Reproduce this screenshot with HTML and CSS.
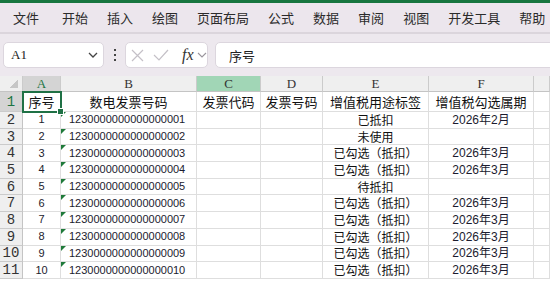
FILE: index.html
```html
<!DOCTYPE html>
<html lang="zh-CN">
<head>
    <meta charset="UTF-8">
    <title>发票清单</title>
    <link rel="stylesheet" href="styles.css">
</head>
<body>

<div class="topbar"></div>

<nav class="menu">
    <span>文件</span>
    <span>开始</span>
    <span>插入</span>
    <span>绘图</span>
    <span>页面布局</span>
    <span>公式</span>
    <span>数据</span>
    <span>审阅</span>
    <span>视图</span>
    <span>开发工具</span>
    <span>帮助</span>
</nav>

<div class="formula-bar">
    <div class="name-box">
        <span class="name-text">A1</span>
        <svg class="chev" width="10" height="6" viewBox="0 0 10 6"><path d="M1 1l4 4 4-4" fill="none" stroke="#444" stroke-width="1.3"/></svg>
    </div>
    <div class="dots"><i></i><i></i><i></i></div>
    <div class="fn-box">
        <svg width="13" height="13" viewBox="0 0 13 13"><path d="M1 1l11 11M12 1L1 12" stroke="#c4c0c7" stroke-width="1.2"/></svg>
        <svg width="16" height="12" viewBox="0 0 16 12"><path d="M1 6l5 5L15 1" fill="none" stroke="#c4c0c7" stroke-width="1.2"/></svg>
        <span class="fx">fx</span>
        <svg width="10" height="6" viewBox="0 0 10 6"><path d="M1 1l4 4 4-4" fill="none" stroke="#9a959d" stroke-width="1.1"/></svg>
    </div>
    <div class="formula-input">序号</div>
</div>

<div class="sheet">
    <div class="corner"></div>
    <div class="col-head sel">A</div>
    <div class="col-head">B</div>
    <div class="col-head hover">C</div>
    <div class="col-head">D</div>
    <div class="col-head">E</div>
    <div class="col-head">F</div>
    <div class="col-head"></div>

    <div class="row-head sel">1</div>
    <div class="cell title active">序号<span class="handle"></span></div>
    <div class="cell title">数电发票号码</div>
    <div class="cell title">发票代码</div>
    <div class="cell title">发票号码</div>
    <div class="cell title">增值税用途标签</div>
    <div class="cell title">增值税勾选属期</div>
    <div class="cell"></div>

    <div class="row-head">2</div>
    <div class="cell num">1</div>
    <div class="cell code">1230000000000000001</div>
    <div class="cell"></div>
    <div class="cell"></div>
    <div class="cell ctr">已抵扣</div>
    <div class="cell date">2026年2月</div>
    <div class="cell"></div>

    <div class="row-head">3</div>
    <div class="cell num">2</div>
    <div class="cell code">1230000000000000002</div>
    <div class="cell"></div>
    <div class="cell"></div>
    <div class="cell ctr">未使用</div>
    <div class="cell date"></div>
    <div class="cell"></div>

    <div class="row-head">4</div>
    <div class="cell num">3</div>
    <div class="cell code">1230000000000000003</div>
    <div class="cell"></div>
    <div class="cell"></div>
    <div class="cell ctr">已勾选（抵扣）</div>
    <div class="cell date">2026年3月</div>
    <div class="cell"></div>

    <div class="row-head">5</div>
    <div class="cell num">4</div>
    <div class="cell code">1230000000000000004</div>
    <div class="cell"></div>
    <div class="cell"></div>
    <div class="cell ctr">已勾选（抵扣）</div>
    <div class="cell date">2026年3月</div>
    <div class="cell"></div>

    <div class="row-head">6</div>
    <div class="cell num">5</div>
    <div class="cell code">1230000000000000005</div>
    <div class="cell"></div>
    <div class="cell"></div>
    <div class="cell ctr">待抵扣</div>
    <div class="cell date"></div>
    <div class="cell"></div>

    <div class="row-head">7</div>
    <div class="cell num">6</div>
    <div class="cell code">1230000000000000006</div>
    <div class="cell"></div>
    <div class="cell"></div>
    <div class="cell ctr">已勾选（抵扣）</div>
    <div class="cell date">2026年3月</div>
    <div class="cell"></div>

    <div class="row-head">8</div>
    <div class="cell num">7</div>
    <div class="cell code">1230000000000000007</div>
    <div class="cell"></div>
    <div class="cell"></div>
    <div class="cell ctr">已勾选（抵扣）</div>
    <div class="cell date">2026年3月</div>
    <div class="cell"></div>

    <div class="row-head">9</div>
    <div class="cell num">8</div>
    <div class="cell code">1230000000000000008</div>
    <div class="cell"></div>
    <div class="cell"></div>
    <div class="cell ctr">已勾选（抵扣）</div>
    <div class="cell date">2026年3月</div>
    <div class="cell"></div>

    <div class="row-head">10</div>
    <div class="cell num">9</div>
    <div class="cell code">1230000000000000009</div>
    <div class="cell"></div>
    <div class="cell"></div>
    <div class="cell ctr">已勾选（抵扣）</div>
    <div class="cell date">2026年3月</div>
    <div class="cell"></div>

    <div class="row-head">11</div>
    <div class="cell num">10</div>
    <div class="cell code">1230000000000000010</div>
    <div class="cell"></div>
    <div class="cell"></div>
    <div class="cell ctr">已勾选（抵扣）</div>
    <div class="cell date">2026年3月</div>
    <div class="cell"></div>
</div>

</body>
</html>
```

FILE: styles.css
```css
body {
    margin: 0;
    width: 550px;
    height: 281px;
    overflow: hidden;
    background: #fff;
    font-family: "Noto Sans CJK SC", sans-serif;
}

.topbar {
    height: 3px;
    background: #17763f;
}

.menu {
    display: flex;
    align-items: center;
    gap: 19px;
    height: 29px;
    padding-left: 13px;
    background: #ece6ed;
    border-bottom: 2px solid #dbd5dc;
    font-size: 13px;
    color: #2b2b2b;
}

.menu span:first-child {
    margin-right: 4px;
}

.formula-bar {
    display: flex;
    align-items: center;
    height: 42px;
    padding-left: 3px;
    background: #ede8ee;
}

.name-box {
    display: flex;
    align-items: center;
    justify-content: space-between;
    width: 101px;
    height: 26px;
    box-sizing: border-box;
    padding: 0 5px 0 7px;
    background: #fff;
    border: 1px solid #dcd6de;
    border-radius: 5px;
}

.name-text {
    font-family: "Liberation Serif", serif;
    font-size: 13px;
    color: #222;
}

.dots {
    display: flex;
    flex-direction: column;
    gap: 3px;
    margin: 0 9px 0 10px;
}

.dots i {
    width: 2px;
    height: 2px;
    background: #444;
}

.fn-box {
    display: flex;
    align-items: center;
    width: 83px;
    height: 26px;
    box-sizing: border-box;
    padding-left: 5px;
    background: #fff;
    border: 1px solid #dcd6de;
    border-radius: 5px;
}

.fn-box svg:nth-child(2) {
    margin-left: 9px;
}

.fx {
    margin-left: 13px;
    margin-right: 3px;
    font-family: "Liberation Serif", serif;
    font-style: italic;
    font-size: 16px;
    color: #333;
}

.formula-input {
    flex: 1;
    display: flex;
    align-items: center;
    height: 26px;
    box-sizing: border-box;
    margin-left: 7px;
    margin-right: -6px;
    padding-left: 13px;
    background: #fff;
    border: 1px solid #dcd6de;
    border-radius: 5px;
    font-size: 13px;
    color: #222;
}

.sheet {
    display: grid;
    grid-template-columns: 23px 38px 136px 64px 62px 106px 105px 16px;
    grid-template-rows: 16px 20px repeat(10, 16.7px);
}

.sheet > div {
    box-sizing: border-box;
    display: flex;
    align-items: center;
    justify-content: center;
    line-height: 1;
    border-right: 1px solid #dedede;
    border-bottom: 1px solid #dedede;
}

.corner {
    background: linear-gradient(to bottom right, transparent 50%, #c6c6c6 50%) right 4px bottom 3px / 9px 9px no-repeat, #efefef;
}

.sheet .col-head,
.sheet .corner {
    background-color: #efefef;
    border-right-color: #cbcbcb;
    border-bottom-color: #c4c4c4;
    font-family: "Liberation Serif", serif;
    font-size: 13px;
    color: #333;
}

.sheet .row-head {
    background: #efefef;
    border-right-color: #c4c4c4;
    border-bottom-color: #cbcbcb;
    font-family: "Liberation Mono", monospace;
    font-size: 14px;
    color: #333;
}

.sheet .col-head.sel,
.sheet .row-head.sel {
    background-color: #d4d4d4;
    color: #1c7443;
}

.sheet .col-head.hover {
    background-color: #a1d6b6;
}

.cell {
    position: relative;
    font-size: 12px;
    color: #111;
}

.title {
    font-size: 13px;
}

.num {
    font-family: "Liberation Sans", sans-serif;
    font-size: 11px;
    color: #1b1b2e;
}

.sheet .code {
    justify-content: flex-start;
    padding-left: 8px;
    font-family: "Liberation Sans", sans-serif;
    font-size: 11px;
    color: #1b1b2e;
}

.code::before {
    content: "";
    position: absolute;
    top: 0;
    left: 0;
    border-top: 5px solid #1f7a3a;
    border-right: 5px solid transparent;
}

.date {
    font-family: "Liberation Sans", "Noto Sans CJK SC", sans-serif;
    font-size: 12px;
    color: #1b1b2e;
}

.active::after {
    content: "";
    position: absolute;
    top: -1px;
    left: -1px;
    right: -2px;
    bottom: -2px;
    border: 2px solid #1f7145;
}

.handle {
    position: absolute;
    right: -4px;
    bottom: -4px;
    width: 5px;
    height: 5px;
    background: #1f7145;
    border: 1px solid #fff;
    z-index: 2;
}
```
